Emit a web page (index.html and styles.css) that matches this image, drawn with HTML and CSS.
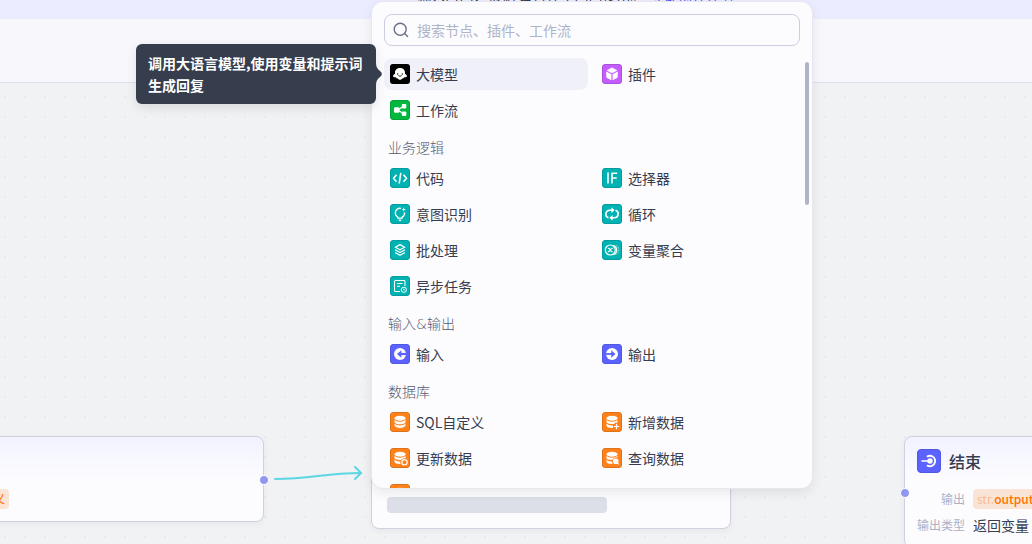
FILE: index.html
```html
<!DOCTYPE html>
<html lang="zh-CN">
<head>
  <meta charset="UTF-8">
  <meta name="viewport" content="width=device-width, initial-scale=1.0">
  <title>工作流</title>
  <link rel="stylesheet" href="styles.css">
</head>
<body>
  <div class="banner">
    <p class="banner-text">输入时间、根据 公告在空间内使用。<a href="#">立即前往体验</a></p>
  </div>
  <header class="topbar"></header>

  <main class="canvas">
    <section class="node node-start">
      <div class="row"><span class="tag">义</span></div>
      <span class="port port-right"></span>
    </section>

    <svg class="edge" width="100" height="24" viewBox="0 0 100 24" fill="none" stroke="#5cd6e3" stroke-width="2" stroke-linecap="round" stroke-linejoin="round">
      <path d="M5 16C42 16 54 10 91 10"/>
      <path d="M85 4l6 6-6 6"/>
    </svg>

    <section class="node node-loading">
      <div class="skeleton"></div>
    </section>

    <section class="node node-end">
      <div class="node-header">
        <svg class="node-icon" viewBox="0 0 24 24">
          <rect x=".5" y=".5" width="23" height="23" rx="3.5" fill="#5c62ff" stroke="#5057e0"/>
          <path d="M10.500 7.400A5.200 5.200 0 1 1 10.500 16.600" fill="none" stroke="#fff" stroke-width="1.800" stroke-linecap="round"/>
          <path d="M5 12h7" stroke="#fff" stroke-width="1.6" stroke-linecap="round"/>
          <circle cx="13" cy="12" r="2.7" fill="#fff"/>
        </svg>
        <h2>结束</h2>
      </div>
      <div class="row">
        <span class="row-label">输出</span>
        <span class="tag"><span class="tag-type">str.</span>output</span>
      </div>
      <div class="row">
        <span class="row-label">输出类型</span>
        <span class="row-value">返回变量</span>
      </div>
      <span class="port port-left"></span>
    </section>
  </main>

  <div class="panel">
    <label class="search">
      <svg width="16" height="16" viewBox="0 0 16 16" fill="none" stroke="#6b7086" stroke-width="1.4" stroke-linecap="round">
        <circle cx="7.2" cy="7.2" r="6"/>
        <path d="M11.6 11.6l3 3"/>
      </svg>
      <input type="text" placeholder="搜索节点、插件、工作流" aria-label="搜索">
    </label>

    <div class="list">
      <div class="grid">
        <button class="item active">
          <svg class="icon" viewBox="0 0 20 20">
            <rect width="20" height="20" rx="3" fill="#000"/>
            <path d="M10 4c-2.900 0-5 1.900-5 4.500v1.400c-1 .3-1.900 1-1.900 2 0 1.200 1.300 1.600 2.700 1.300.3.900 1.200 1.400 2.200 1.200.5 1 1.100 1.300 2 1.300s1.500-.3 2-1.300c1 .2 1.900-.3 2.200-1.200 1.400.3 2.700-.1 2.700-1.300 0-1-.9-1.700-1.900-2V8.500C15 5.900 12.900 4 10 4z" fill="#fff"/>
            <path d="M7.700 9.600v.8M12.300 9.600v.8M8.700 11.700c.7.800 1.900.8 2.600 0" fill="none" stroke="#000" stroke-width=".9" stroke-linecap="round"/>
          </svg>
          大模型
        </button>
        <button class="item">
          <svg class="icon" viewBox="0 0 20 20">
            <rect x=".5" y=".5" width="19" height="19" rx="2.500" fill="#c55cff" stroke="#ac50e0"/>
            <path d="M10 3.800l5 2.600-5 2.700-5-2.700z" fill="#fff" stroke="#fff" stroke-width=".5" stroke-linejoin="round"/>
            <path d="M4.200 7.500l5.200 2.700v6L5 13.900a1.500 1.500 0 0 1-.8-1.300zM15.800 7.500l-5.200 2.700v6l4.400-2.300a1.500 1.500 0 0 0 .8-1.300z" fill="#fff"/>
          </svg>
          插件
        </button>
        <button class="item">
          <svg class="icon" viewBox="0 0 20 20">
            <rect x=".5" y=".5" width="19" height="19" rx="2.500" fill="#00b83e" stroke="#00a238"/>
            <path d="M8 10l5-3.500M8 10l5 3.500" fill="none" stroke="#fff" stroke-width="1.200"/>
            <rect x="4" y="7.200" width="5.500" height="5.500" rx="1.200" fill="#fff"/>
            <rect x="11.800" y="4" width="4.500" height="4.500" rx="1" fill="#fff"/>
            <rect x="11.800" y="11.500" width="4.500" height="4.500" rx="1" fill="#fff"/>
          </svg>
          工作流
        </button>
      </div>

      <h3>业务逻辑</h3>
      <div class="grid">
        <button class="item">
          <svg class="icon teal" viewBox="0 0 20 20">
            <rect x=".5" y=".5" width="19" height="19" rx="2.500"/>
            <path d="M6.500 6.800L3.500 10.300l3 3.500M13.500 6.800l3 3.500-3 3.500M10.800 4.800L9.200 15.500" stroke-width="1.600"/>
          </svg>
          代码
        </button>
        <button class="item">
          <svg class="icon teal" viewBox="0 0 20 20">
            <rect x=".5" y=".5" width="19" height="19" rx="2.500"/>
            <path d="M6 4.500v11M10 15.500V5.200h5.200M10 10h4.700" stroke-width="1.600"/>
          </svg>
          选择器
        </button>
        <button class="item">
          <svg class="icon teal" viewBox="0 0 20 20">
            <rect x=".5" y=".5" width="19" height="19" rx="2.500"/>
            <path d="M11 4.300A4.700 4.700 0 0 0 7.800 13v1.200h4.400V13a4.700 4.700 0 0 0 2.400-4.500" stroke-width="1.300"/>
            <path d="M8.700 16.200h2.600" stroke-width="1.400"/>
            <path d="M13.700 3.200l.6 1.700 1.700.6-1.700.6-.6 1.700-.6-1.700-1.700-.6 1.700-.6z" fill="#fff" stroke="none"/>
          </svg>
          意图识别
        </button>
        <button class="item">
          <svg class="icon teal" viewBox="0 0 20 20">
            <rect x=".5" y=".5" width="19" height="19" rx="2.500"/>
            <path d="M6.500 13.800A3.900 3.900 0 0 1 7.500 6.200H10M13.500 6.200A3.900 3.900 0 0 1 12.500 13.800H10" stroke-width="1.600"/>
            <path d="M9.400 3.300v5.800L12.600 6.200zM10.600 10.900v5.800L7.400 13.800z" fill="#fff" stroke="none"/>
          </svg>
          循环
        </button>
        <button class="item">
          <svg class="icon teal" viewBox="0 0 20 20">
            <rect x=".5" y=".5" width="19" height="19" rx="2.500"/>
            <path d="M10 4.600l4.700 2.600-4.700 2.600-4.700-2.600zM5 9.700l5 2.800 5-2.800M5 12.500l5 2.800 5-2.800" stroke-width="1.300"/>
          </svg>
          批处理
        </button>
        <button class="item">
          <svg class="icon teal" viewBox="0 0 20 20">
            <rect x=".5" y=".5" width="19" height="19" rx="2.500"/>
            <circle cx="8.300" cy="10" r="5" stroke-width="1.200"/>
            <path d="M5.900 8.300h1c.8 0 1.900 3.400 2.800 3.400h.9M10.700 8.300h-.8c-.9 0-2.400 3.400-3.300 3.400h-.8" stroke-width="1.200"/>
            <path d="M11.500 5.200a5.200 5.200 0 0 1 0 9.600" stroke-width="1.200"/>
            <path d="M14.500 5.500a5.500 5.500 0 0 1 0 9" stroke-width=".8" stroke-dasharray="1.200 1.200"/>
          </svg>
          变量聚合
        </button>
        <button class="item">
          <svg class="icon teal" viewBox="0 0 20 20">
            <rect x=".5" y=".5" width="19" height="19" rx="2.500"/>
            <path d="M10 15.500H5.500a1 1 0 0 1-1-1v-9a1 1 0 0 1 1-1h8.500a1 1 0 0 1 1 1V10M7 7.500h5.500M7 10.300h3" stroke-width="1.100"/>
            <circle cx="13.800" cy="13.800" r="2.600" stroke-width="1"/>
            <path d="M13.700 12.500v1.500h1.200" stroke-width=".8"/>
          </svg>
          异步任务
        </button>
      </div>

      <h3>输入&amp;输出</h3>
      <div class="grid">
        <button class="item">
          <svg class="icon" viewBox="0 0 20 20">
            <rect x=".5" y=".5" width="19" height="19" rx="2.500" fill="#5c62ff" stroke="#5057e0"/>
            <circle cx="10" cy="10" r="6" fill="#fff"/>
            <path d="M17 10h-6" stroke="#5c62ff" stroke-width="2.200"/>
            <path d="M11.300 6.300v7.400L7 10z" fill="#5c62ff"/>
          </svg>
          输入
        </button>
        <button class="item">
          <svg class="icon" viewBox="0 0 20 20">
            <rect x=".5" y=".5" width="19" height="19" rx="2.500" fill="#5c62ff" stroke="#5057e0"/>
            <circle cx="10" cy="10" r="6" fill="#fff"/>
            <path d="M3.500 10H10" stroke="#5c62ff" stroke-width="1.800"/>
            <path d="M9.200 6.300v7.400l4.300-3.700z" fill="#5c62ff"/>
          </svg>
          输出
        </button>
      </div>

      <h3>数据库</h3>
      <div class="grid">
        <button class="item">
          <svg class="icon orange" viewBox="0 0 20 20">
            <rect x=".5" y=".5" width="19" height="19" rx="2.500"/>
            <ellipse cx="10" cy="6.300" rx="5.500" ry="2.500"/>
            <path d="M4.500 7.800c1.500 2.500 9.500 2.500 11 0v2.400c-1.500 2.700-9.500 2.700-11 0zM4.500 11.600c1.500 2.500 9.500 2.500 11 0v2c-1.500 3.300-9.500 3.300-11 0z"/>
          </svg>
          SQL自定义
        </button>
        <button class="item">
          <svg class="icon orange" viewBox="0 0 20 20">
            <rect x=".5" y=".5" width="19" height="19" rx="2.500"/>
            <ellipse cx="10" cy="6.300" rx="5.500" ry="2.500"/>
            <path d="M4.500 7.800c1.500 2.500 9.500 2.500 11 0v2.700h-2.300l-.8 1.300c-3 .7-6.900.2-7.900-1.500zM4.500 11.600c1.200 1.600 4 2.100 6.500 1.800v2.500c-3 .3-6-.5-6.500-2.200z"/>
            <path class="line" d="M14.500 11.800v5.400M11.800 14.500h5.400"/>
          </svg>
          新增数据
        </button>
        <button class="item">
          <svg class="icon orange" viewBox="0 0 20 20">
            <rect x=".5" y=".5" width="19" height="19" rx="2.500"/>
            <ellipse cx="10" cy="6.300" rx="5.500" ry="2.500"/>
            <path d="M4.500 7.800c1.500 2.500 9.500 2.500 11 0v2.500c-2-.4-3.500.4-4.300 1.600-3 .3-5.900-.2-6.700-1.600zM4.500 11.600c1.200 1.600 3.500 2 5.700 1.800l.3 2.500c-3 .2-5.500-.5-6-2.200z"/>
            <circle class="line" cx="14.500" cy="14.300" r="2.700"/>
          </svg>
          更新数据
        </button>
        <button class="item">
          <svg class="icon orange" viewBox="0 0 20 20">
            <rect x=".5" y=".5" width="19" height="19" rx="2.500"/>
            <ellipse cx="10" cy="6.300" rx="5.500" ry="2.500"/>
            <path d="M4.500 7.800c1.500 2.500 9.500 2.500 11 0v1.700c-2.500-.3-4.300.8-5 2.300-3 .2-5.300-.2-6-1.500zM4.500 11.600c1.200 1.600 3.300 2 5.300 1.900l.8 2.400c-3 .2-5.600-.5-6.100-2.200z"/>
            <circle cx="13.700" cy="13.200" r="2.800"/>
            <path class="line" d="M15 14.600l1.800 1.800"/>
          </svg>
          查询数据
        </button>
        <button class="item" aria-label="删除数据">
          <svg class="icon orange" viewBox="0 0 20 20">
            <rect x=".5" y=".5" width="19" height="19" rx="2.500"/>
            <ellipse cx="10" cy="6.300" rx="5.500" ry="2.500"/>
          </svg>
        </button>
      </div>
    </div>
    <div class="scroll-thumb"></div>
  </div>

  <div class="tooltip" role="tooltip">
    调用大语言模型,使用变量和提示词生成回复
    <svg class="tooltip-arrow" width="7" height="24" viewBox="0 0 7 24" fill="#363d4d">
      <path d="M0 1c0 4 1.500 6 4 8s2.500 4 0 6-4 4-4 8z"/>
    </svg>
  </div>
</body>
</html>
```

FILE: styles.css
```css
* {
  box-sizing: border-box;
}
body {
  margin: 0;
  position: relative;
  min-height: 100vh;
  display: flex;
  flex-direction: column;
  overflow: hidden;
  font-family: "Noto Sans CJK SC", sans-serif;
  font-size: 14px;
  line-height: 20px;
  color: #383c4f;
}
h2, h3, p {
  margin: 0;
}
button, input {
  font: inherit;
  color: inherit;
}

/* top */
.banner {
  height: 19px;
  padding-bottom: 14px;
  display: flex;
  align-items: flex-end;
  justify-content: center;
  background: #ebecff;
}
.banner-text {
  margin-left: 120px;
  white-space: nowrap;
}
.banner-text a {
  margin-left: 6px;
  color: #4e54f5;
  text-decoration: none;
}
.topbar {
  height: 64px;
  background: #f7f7fc;
  border-bottom: 1px solid #dddfeb;
}

/* canvas */
.canvas {
  flex: 1;
  position: relative;
  overflow: hidden;
  background-color: #f1f2f4;
  background-image: radial-gradient(circle, #e9eaed 1px, transparent 1px);
  background-size: 20px 20px;
  background-position: 15px 4px;
}
.node {
  position: absolute;
  padding: 12px;
  display: flex;
  flex-direction: column;
  gap: 6px;
  background: #fcfcff;
  border: 1px solid #cfd0e2;
  border-radius: 8px;
  box-shadow: 0 2px 6px rgba(0, 0, 0, 0.05);
}
.node-start,
.node-end {
  top: 353px;
  background: linear-gradient(#f2f2ff, #fcfcff 42px);
}
.node-start {
  left: -24px;
  width: 288px;
  padding-top: 52px;
}
.node-loading {
  left: 371px;
  top: 353px;
  width: 360px;
  padding: 60px 15px 15px;
}
.node-end {
  left: 904px;
  width: 360px;
}
.node-header {
  display: flex;
  align-items: center;
  gap: 8px;
  margin-bottom: 10px;
}
.node-header h2 {
  font-size: 16px;
  font-weight: 500;
  line-height: 24px;
}
.node-icon {
  width: 24px;
  height: 24px;
}
.skeleton {
  width: 220px;
  height: 16px;
  border-radius: 4px;
  background: #dcdfe8;
}
.row {
  display: flex;
  align-items: center;
  gap: 8px;
}
.row-label {
  width: 48px;
  text-align: right;
  font-size: 12px;
  color: #adb0c4;
}
.tag {
  padding: 0 4px;
  border-radius: 4px;
  background: #fae4d5;
  color: #ff7300;
  font-size: 12px;
  font-weight: 500;
}
.tag-type {
  color: #f7bd90;
  font-weight: 400;
}
.port {
  position: absolute;
  width: 10px;
  height: 10px;
  border: 1px solid #fff;
  border-radius: 50%;
  background: #9197f1;
}
.port-right {
  right: -6px;
  top: 38px;
}
.port-left {
  left: -5px;
  top: 51px;
}
.edge {
  position: absolute;
  left: 270px;
  top: 380px;
}

/* node panel */
.panel {
  position: absolute;
  left: 371px;
  top: 1px;
  width: 442px;
  padding: 12px 12px 0;
  display: flex;
  flex-direction: column;
  gap: 12px;
  background: #fcfcff;
  border: 1px solid #e6e7ef;
  border-radius: 12px;
  box-shadow: 0 4px 12px rgba(0, 0, 0, 0.08);
}
.search {
  height: 32px;
  padding: 0 8px;
  display: flex;
  align-items: center;
  gap: 8px;
  border: 1px solid #cbcde0;
  border-radius: 8px;
}
.search input {
  flex: 1;
  min-width: 0;
  padding: 0;
  border: 0;
  outline: 0;
  background: none;
}
.search input::placeholder {
  color: #aeb4c6;
  opacity: 1;
}
.list {
  max-height: 430px;
  overflow-y: auto;
  scrollbar-width: none;
}
.list h3 {
  margin: 12px 4px 4px;
  font-family: "DejaVu Sans", "Noto Sans CJK SC", sans-serif;
  font-size: 14px;
  font-weight: 300;
  color: #555a70;
}
.grid {
  display: grid;
  grid-template-columns: 1fr 1fr;
  gap: 4px 8px;
}
.item {
  height: 32px;
  padding: 0 6px;
  display: flex;
  align-items: center;
  gap: 6px;
  border: 0;
  border-radius: 8px;
  background: none;
  text-align: left;
  cursor: pointer;
}
.item.active {
  background: #f0f0f8;
}
.icon {
  width: 20px;
  height: 20px;
  flex: none;
}
.teal {
  fill: none;
  stroke: #fff;
  stroke-linejoin: round;
}
.teal rect {
  fill: #00b2b2;
  stroke: #009c9e;
}
.orange {
  fill: #fff;
}
.orange rect {
  fill: #ff811a;
  stroke: #df7117;
}
.orange .line {
  fill: none;
  stroke: #fff;
  stroke-width: 1.2;
}
.scroll-thumb {
  position: absolute;
  right: 3px;
  top: 60px;
  width: 4px;
  height: 143px;
  border-radius: 2px;
  background: #b0b4c8;
}

/* tooltip */
.tooltip {
  position: absolute;
  left: 136px;
  top: 44px;
  width: 240px;
  padding: 8px 12px;
  border-radius: 6px;
  background: #363d4d;
  box-shadow: 0 4px 12px rgba(0, 0, 0, 0.1);
  color: #fff;
  font-weight: 600;
  line-height: 22px;
}
.tooltip-arrow {
  position: absolute;
  left: 100%;
  top: 18px;
}
```
